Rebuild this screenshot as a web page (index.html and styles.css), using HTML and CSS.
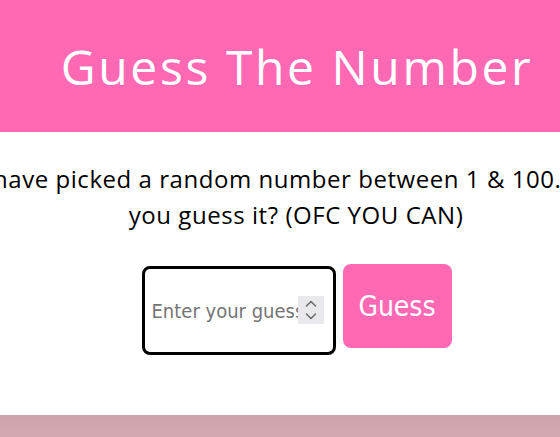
FILE: index.html
```html
<!DOCTYPE html>
<html>
<head>
<meta charset="utf-8">
<link rel="stylesheet" href="styles.css">
</head>
<body>
<header class="top">
  <h1 class="title">Guess The Number</h1>
</header>
<main class="game">
  <p class="intro">I have picked a random number between 1 &amp; 100. Can you guess it? (OFC YOU CAN)</p>
  <div class="controls">
    <div class="field">
      <input class="guess-input" type="number" placeholder="Enter your guess">
      <span class="spin" aria-hidden="true">
        <svg width="26" height="28" viewBox="0 0 26 28">
          <polyline points="8.5,10 13,5.5 17.5,10" fill="none" stroke="#6d6d72" stroke-width="1.6" stroke-linecap="round" stroke-linejoin="round"/>
          <polyline points="8.5,18 13,22.5 17.5,18" fill="none" stroke="#6d6d72" stroke-width="1.6" stroke-linecap="round" stroke-linejoin="round"/>
        </svg>
      </span>
    </div>
    <button class="guess-btn">Guess</button>
  </div>
</main>
<section class="band"></section>
</body>
</html>
```
FILE: styles.css
```css
html, body {
  margin: 0;
  padding: 0;
  overflow: hidden;
}
body {
  background: #ffffff;
  font-family: "Open Sans", sans-serif;
}
.top {
  background: #ff69b4;
  height: 132px;
  display: flex;
  align-items: center;
  justify-content: center;
  padding-left: 34px;
  box-sizing: border-box;
}
.title {
  margin: 0;
  color: #ffffff;
  font-family: "Open Sans", sans-serif;
  font-weight: 400;
  font-size: 48px;
  letter-spacing: 2.6px;
  white-space: nowrap;
}
.game {
  height: 283px;
  display: flex;
  flex-direction: column;
  align-items: center;
  padding-left: 32px;
}
.intro {
  margin: 29px 0 0;
  width: 640px;
  flex-shrink: 0;
  text-align: center;
  font-size: 24px;
  letter-spacing: 0.55px;
  line-height: 36px;
  color: #000;
}
.controls {
  margin-top: 31px;
  display: flex;
  align-items: flex-start;
  gap: 7px;
  padding-left: 1px;
}
.field {
  position: relative;
  margin-top: 2px;
}
.guess-input {
  display: block;
  box-sizing: border-box;
  width: 194px;
  height: 89px;
  border: 3px solid #000;
  border-radius: 8px;
  padding: 0 34px 0 7px;
  font-family: "DejaVu Sans Condensed", "DejaVu Sans", sans-serif;
  font-size: 20px;
  outline: none;
  -moz-appearance: textfield;
}
.guess-input::placeholder {
  color: #757575;
}
.guess-input::-webkit-inner-spin-button,
.guess-input::-webkit-outer-spin-button {
  -webkit-appearance: none;
  margin: 0;
}
.spin {
  position: absolute;
  left: 156px;
  top: 30px;
  width: 26px;
  height: 28px;
  background: #e9e9ed;
  display: block;
}
.spin svg {
  display: block;
}
.guess-btn {
  box-sizing: border-box;
  width: 109px;
  height: 84px;
  border: none;
  border-radius: 8px;
  background: #ff69b4;
  color: #fff;
  font-family: "DejaVu Sans Condensed", "DejaVu Sans", sans-serif;
  font-size: 28px;
  padding: 0;
}
.band {
  height: 22px;
  background: linear-gradient(#cea2aa, #d4aab2);
}
```
